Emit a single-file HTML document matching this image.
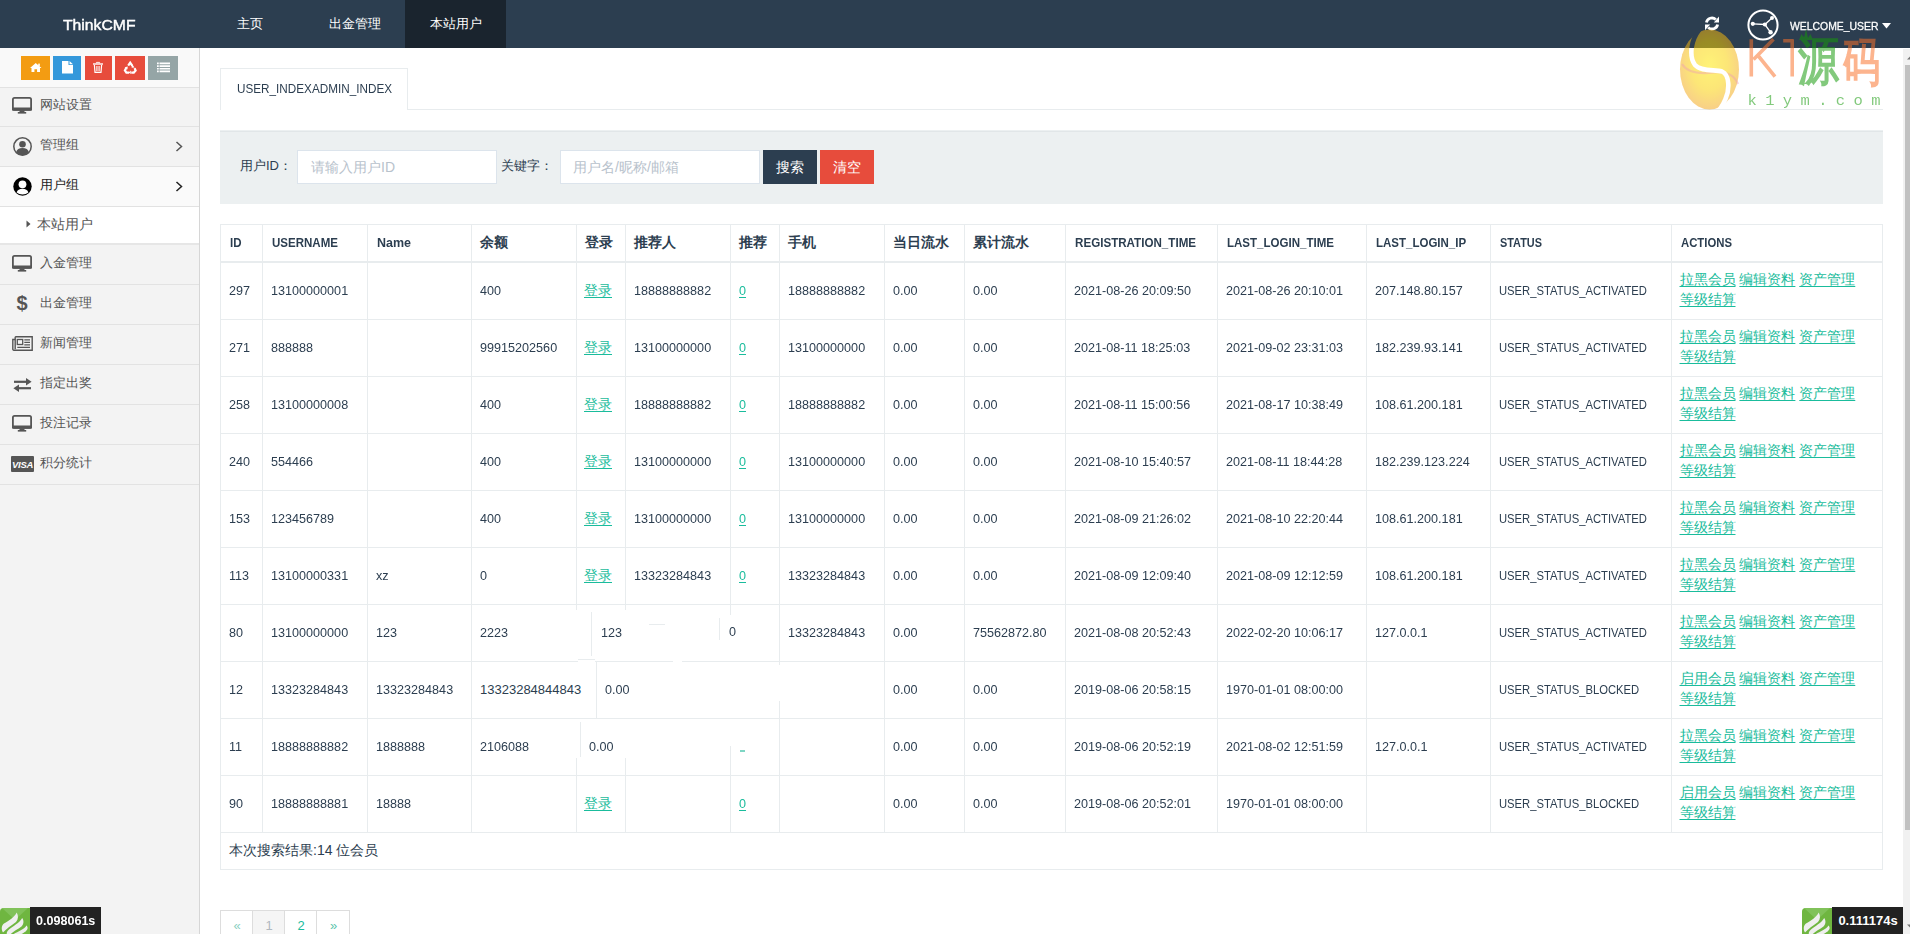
<!DOCTYPE html>
<html><head><meta charset="utf-8"><title>ThinkCMF</title>
<style>
html,body{margin:0;padding:0;}
body{width:1910px;height:934px;overflow:hidden;position:relative;background:#fff;font-family:"Liberation Sans",sans-serif;color:#2c3e50;}
.t{position:absolute;white-space:nowrap;transform-origin:0 50%;}
.r{position:absolute;}
.lk{color:#1abc9c;text-decoration:underline;text-underline-offset:2px;}
svg{position:absolute;overflow:visible;}
</style></head><body>

<div class="r" style="left:0px;top:0px;width:1910px;height:48px;background:#2c3e50;"></div>
<div class="r" style="left:405px;top:0px;width:101px;height:48px;background:#1a242e;"></div>
<div class="t " style="left:63.0px;top:14.6px;font-size:15.5px;line-height:20px;color:#fff;transform:scaleX(1.0140);-webkit-text-stroke:0.45px #fff;">ThinkCMF</div>
<div class="t " style="left:237.0px;top:13.5px;font-size:13px;line-height:20px;color:#fff;">主页</div>
<div class="t " style="left:329.0px;top:13.5px;font-size:13px;line-height:20px;color:#fff;">出金管理</div>
<div class="t " style="left:429.5px;top:13.5px;font-size:13px;line-height:20px;color:#fff;">本站用户</div>
<div class="t " style="left:1790.0px;top:16.1px;font-size:11.8px;line-height:20px;color:#fff;transform:scaleX(0.8824);-webkit-text-stroke:0.3px #fff;">WELCOME_USER</div>
<svg style="left:1882px;top:23px" width="9" height="6"><path d="M0 0 L9 0 L4.5 5.5 Z" fill="#fff"/></svg>
<svg style="left:1703px;top:15px" width="18" height="17" viewBox="0 0 18 17">
<path d="M3.4 7.6 A5.6 5.6 0 0 1 12.8 4.6" fill="none" stroke="#fff" stroke-width="2.8"/>
<path d="M10.8 7.4 L16 7.4 L16 1.6 Z" fill="#fff"/>
<path d="M14.6 9.4 A5.6 5.6 0 0 1 5.2 12.4" fill="none" stroke="#fff" stroke-width="2.8"/>
<path d="M7.2 9.6 L2 9.6 L2 15.2 Z" fill="#fff"/>
</svg>
<svg style="left:1747px;top:9px" width="32" height="32" viewBox="0 0 32 32">
<circle cx="16" cy="16" r="14.6" fill="none" stroke="#fff" stroke-width="2"/>
<path d="M5.8 14.8 L17.9 15.5 L25 9.1 M17.9 15.5 L23.6 23.3" stroke="#fff" stroke-width="1.3" fill="none"/>
<circle cx="5.8" cy="14.8" r="2.1" fill="#fff"/><circle cx="17.9" cy="15.5" r="2.1" fill="#fff"/>
<circle cx="25" cy="9.1" r="2" fill="#fff"/><circle cx="23.6" cy="23.3" r="2.2" fill="#fff"/>
</svg>
<div class="r" style="left:0px;top:48px;width:199px;height:886px;background:#f3f3f3;"></div>
<div class="r" style="left:199px;top:48px;width:1px;height:886px;background:#d6d6d6;"></div>
<div class="r" style="left:0px;top:48px;width:199px;height:39px;background:#f9f9f9;"></div>
<div class="r" style="left:0px;top:87px;width:199px;height:1px;background:#e2e2e2;"></div>
<div class="r" style="left:21px;top:56px;width:29px;height:24px;background:#f39c12;"></div>
<div class="r" style="left:53px;top:56px;width:28px;height:24px;background:#3498db;"></div>
<div class="r" style="left:85px;top:56px;width:27px;height:24px;background:#e74c3c;"></div>
<div class="r" style="left:115px;top:56px;width:30px;height:24px;background:#e74c3c;"></div>
<div class="r" style="left:148px;top:56px;width:30px;height:24px;background:#95a5a6;"></div>
<svg style="left:29.5px;top:63px" width="11.5" height="9" viewBox="0 0 13 10">
<path d="M6.5 0 L0 5.6 L1.7 5.6 L1.7 10 L5 10 L5 7 L8 7 L8 10 L11.3 10 L11.3 5.6 L13 5.6 Z" fill="#fff"/>
<rect x="9.3" y="0.6" width="1.8" height="3" fill="#fff"/></svg>
<svg style="left:62px;top:61px" width="11" height="13" viewBox="0 0 11 13">
<path d="M0 0 L6.5 0 L6.5 4 L11 4 L11 12.5 L0 12.5 Z M7.5 0 L11 3.2 L7.5 3.2 Z" fill="#fff"/></svg>
<svg style="left:93px;top:62px" width="10" height="11" viewBox="0 0 10 11">
<path d="M3.4 1.3 L3.4 0.4 L6.6 0.4 L6.6 1.3" fill="none" stroke="#fff" stroke-width="0.9"/>
<rect x="0" y="1.3" width="10" height="1.4" fill="#fff"/>
<path d="M1.4 3 L2 10.4 L8 10.4 L8.6 3" fill="none" stroke="#fff" stroke-width="1.2"/>
<path d="M3.7 4 V9.2 M5 4 V9.2 M6.3 4 V9.2" stroke="#fff" stroke-width="0.8"/></svg>
<svg style="left:123.5px;top:61.5px" width="12.5" height="11.5" viewBox="0 0 12.5 11.5">
<path d="M4.2 3.6 L6.2 0.6 L8.4 3.8" fill="none" stroke="#fff" stroke-width="2.2"/>
<path d="M10.6 6.2 L11.6 8.6 L9.8 10.6 L7.2 10.6" fill="none" stroke="#fff" stroke-width="2.2"/>
<path d="M5 10.6 L2.4 10.6 L0.9 8.4 L2.2 6" fill="none" stroke="#fff" stroke-width="2.2"/>
<path d="M8.2 2.4 L10.6 5.6 L7.6 5.8 Z M6.8 8.4 L4.6 10.6 L6.8 12 Z M0.6 5.2 L3.8 4.6 L3.4 7.6 Z" fill="#fff"/>
</svg>
<svg style="left:157px;top:62px" width="13" height="11" viewBox="0 0 13 11">
<path d="M0 0.5 H13 V2.2 H0 Z M0 3.2 H13 V4.9 H0 Z M0 5.9 H13 V7.6 H0 Z M0 8.6 H13 V10.3 H0 Z" fill="#fff"/>
<path d="M2.2 0 V11" stroke="#95a5a6" stroke-width="0.8"/></svg>
<div class="r" style="left:0px;top:126px;width:199px;height:1px;background:#e2e2e2;"></div>
<div class="t " style="left:40.0px;top:94.8px;font-size:13px;line-height:20px;color:#555;">网站设置</div>
<div class="r" style="left:0px;top:166px;width:199px;height:1px;background:#e2e2e2;"></div>
<div class="t " style="left:40.0px;top:134.8px;font-size:13px;line-height:20px;color:#555;">管理组</div>
<svg style="left:175px;top:141.0px" width="8" height="11"><path d="M1.5 1 L6.5 5.5 L1.5 10" fill="none" stroke="#555" stroke-width="1.5"/></svg>
<div class="r" style="left:0px;top:167px;width:199px;height:39px;background:#fafafa;"></div>
<div class="r" style="left:0px;top:206px;width:199px;height:1px;background:#e2e2e2;"></div>
<div class="t " style="left:40.0px;top:174.8px;font-size:13px;line-height:20px;color:#222;">用户组</div>
<svg style="left:175px;top:181.0px" width="8" height="11"><path d="M1.5 1 L6.5 5.5 L1.5 10" fill="none" stroke="#222" stroke-width="1.5"/></svg>
<div class="r" style="left:0px;top:207px;width:199px;height:36px;background:#fff;"></div>
<div class="r" style="left:0px;top:243px;width:199px;height:2px;background:#e6e6e6;"></div>
<svg style="left:26px;top:220px" width="5" height="8"><path d="M0.5 0.5 L4.5 4 L0.5 7.5 Z" fill="#555"/></svg>
<div class="t " style="left:37.0px;top:214.0px;font-size:14px;line-height:20px;color:#555;">本站用户</div>
<div class="r" style="left:0px;top:284px;width:199px;height:1px;background:#e2e2e2;"></div>
<div class="t " style="left:40.0px;top:252.8px;font-size:13px;line-height:20px;color:#555;">入金管理</div>
<div class="r" style="left:0px;top:324px;width:199px;height:1px;background:#e2e2e2;"></div>
<div class="t " style="left:40.0px;top:292.8px;font-size:13px;line-height:20px;color:#555;">出金管理</div>
<div class="r" style="left:0px;top:364px;width:199px;height:1px;background:#e2e2e2;"></div>
<div class="t " style="left:40.0px;top:332.8px;font-size:13px;line-height:20px;color:#555;">新闻管理</div>
<div class="r" style="left:0px;top:404px;width:199px;height:1px;background:#e2e2e2;"></div>
<div class="t " style="left:40.0px;top:372.8px;font-size:13px;line-height:20px;color:#555;">指定出奖</div>
<div class="r" style="left:0px;top:444px;width:199px;height:1px;background:#e2e2e2;"></div>
<div class="t " style="left:40.0px;top:412.8px;font-size:13px;line-height:20px;color:#555;">投注记录</div>
<div class="r" style="left:0px;top:484px;width:199px;height:1px;background:#e2e2e2;"></div>
<div class="t " style="left:40.0px;top:452.8px;font-size:13px;line-height:20px;color:#555;">积分统计</div>
<svg style="left:12.0px;top:97.0px" width="20" height="17" viewBox="0 0 20 17">
<rect x="0.9" y="0.9" width="18.2" height="12" rx="1.6" fill="none" stroke="#555" stroke-width="1.8"/>
<rect x="0" y="10.4" width="20" height="3.4" rx="1" fill="#555"/>
<rect x="7.5" y="13.5" width="5" height="1.8" fill="#555"/><rect x="5.8" y="15" width="8.4" height="1.6" fill="#555"/>
</svg>
<svg style="left:13.0px;top:137.0px" width="19" height="19" viewBox="0 0 19 19">
<circle cx="9.5" cy="9.5" r="8.7" fill="none" stroke="#555" stroke-width="1.5"/>
<circle cx="9.5" cy="7.2" r="3.3" fill="#555"/>
<path d="M3.2 15.2 Q4.2 11 9.5 11 Q14.8 11 15.8 15.2 Q13 18.2 9.5 18.2 Q6 18.2 3.2 15.2 Z" fill="#555"/>
</svg>
<svg style="left:13.0px;top:177.0px" width="19" height="19" viewBox="0 0 19 19">
<circle cx="9.5" cy="9.5" r="9.2" fill="#000"/>
<circle cx="9.5" cy="7.3" r="3.9" fill="#fff"/>
<path d="M3.6 15.4 Q4.8 11.8 9.5 11.8 Q14.2 11.8 15.4 15.4 Q13 17.4 9.5 17.4 Q6 17.4 3.6 15.4 Z" fill="#fff"/>
</svg>
<svg style="left:12.0px;top:255.2px" width="20" height="17" viewBox="0 0 20 17">
<rect x="0.9" y="0.9" width="18.2" height="12" rx="1.6" fill="none" stroke="#555" stroke-width="1.8"/>
<rect x="0" y="10.4" width="20" height="3.4" rx="1" fill="#555"/>
<rect x="7.5" y="13.5" width="5" height="1.8" fill="#555"/><rect x="5.8" y="15" width="8.4" height="1.6" fill="#555"/>
</svg>
<div class="t" style="left:16.5px;top:293.0px;font-size:20px;line-height:20px;font-weight:bold;color:#555">$</div>
<svg style="left:12.0px;top:336.2px" width="21" height="15" viewBox="0 0 21 15">
<path d="M3.2 0.8 H20.2 V14.2 H1.8 Q0.8 14.2 0.8 13 V3.5 H3.2" fill="none" stroke="#555" stroke-width="1.4"/>
<path d="M3.2 0.8 V13.2" stroke="#555" stroke-width="1.4"/>
<rect x="5.3" y="3.5" width="5.4" height="5" fill="none" stroke="#555" stroke-width="1.3"/>
<path d="M12.3 3.8 H18 M12.3 6.3 H18 M12.3 8.8 H18 M5.3 11.3 H18" stroke="#555" stroke-width="1.3"/>
</svg>
<svg style="left:12.5px;top:378.0px" width="19" height="14" viewBox="0 0 19 14">
<path d="M1 3.8 H14" stroke="#555" stroke-width="2.2"/><path d="M13 0 L18.6 3.8 L13 7.6 Z" fill="#555"/>
<path d="M18 10.2 H5" stroke="#555" stroke-width="2.2"/><path d="M6 6.4 L0.4 10.2 L6 14 Z" fill="#555"/>
</svg>
<svg style="left:12.0px;top:415.2px" width="20" height="17" viewBox="0 0 20 17">
<rect x="0.9" y="0.9" width="18.2" height="12" rx="1.6" fill="none" stroke="#555" stroke-width="1.8"/>
<rect x="0" y="10.4" width="20" height="3.4" rx="1" fill="#555"/>
<rect x="7.5" y="13.5" width="5" height="1.8" fill="#555"/><rect x="5.8" y="15" width="8.4" height="1.6" fill="#555"/>
</svg>
<svg style="left:11.0px;top:455.5px" width="23" height="16" viewBox="0 0 23 16">
<rect x="0" y="0" width="23" height="16" rx="1" fill="#555"/>
<text x="11.5" y="11.8" text-anchor="middle" font-family="Liberation Sans" font-weight="bold" font-style="italic" font-size="9.5" fill="#fff" letter-spacing="-0.3">VISA</text>
</svg>
<div class="r" style="left:220px;top:68px;width:188px;height:1px;background:#e8ecee;"></div>
<div class="r" style="left:220px;top:68px;width:1px;height:42px;background:#e8ecee;"></div>
<div class="r" style="left:407px;top:68px;width:1px;height:42px;background:#e8ecee;"></div>
<div class="r" style="left:407px;top:109px;width:1476px;height:1px;background:#e8ecee;"></div>
<div class="t " style="left:236.5px;top:78.5px;font-size:13px;line-height:20px;color:#2c3e50;transform:scaleX(0.9017);">USER_INDEXADMIN_INDEX</div>
<div class="r" style="left:220px;top:130px;width:1663px;height:74px;background:#ecf0f1;"></div>
<div class="r" style="left:220px;top:131px;width:1663px;height:1px;background:#e1e6e8;"></div>
<div class="t " style="left:240.0px;top:156.0px;font-size:13px;line-height:20px;color:#2c3e50;">用户ID：</div>
<div class="r" style="left:297px;top:150px;width:200px;height:34px;background:#fff;box-sizing:border-box;border:1px solid #dce4ec;"></div>
<div class="t " style="left:311.0px;top:157.0px;font-size:14px;line-height:20px;color:#b8c2cc;">请输入用户ID</div>
<div class="t " style="left:501.0px;top:156.0px;font-size:13px;line-height:20px;color:#2c3e50;">关键字：</div>
<div class="r" style="left:560px;top:150px;width:200px;height:34px;background:#fff;box-sizing:border-box;border:1px solid #dce4ec;"></div>
<div class="t " style="left:573.0px;top:157.0px;font-size:14px;line-height:20px;color:#b8c2cc;">用户名/昵称/邮箱</div>
<div class="r" style="left:763px;top:150px;width:54px;height:34px;background:#2c3e50;"></div>
<div class="t " style="left:776.0px;top:156.5px;font-size:14px;line-height:20px;color:#fff;">搜索</div>
<div class="r" style="left:820px;top:150px;width:54px;height:34px;background:#e74c3c;"></div>
<div class="t " style="left:833.0px;top:156.5px;font-size:14px;line-height:20px;color:#fff;">清空</div>
<div class="r" style="left:220px;top:224px;width:1663px;height:1px;background:#e8ecee;"></div>
<div class="r" style="left:220px;top:224px;width:1px;height:645px;background:#e8ecee;"></div>
<div class="r" style="left:1882px;top:224px;width:1px;height:645px;background:#e8ecee;"></div>
<div class="r" style="left:220px;top:869px;width:1663px;height:1px;background:#e8ecee;"></div>
<div class="r" style="left:220px;top:261px;width:1663px;height:2px;background:#e8ecee;"></div>
<div class="r" style="left:220px;top:319px;width:1663px;height:1px;background:#e8ecee;"></div>
<div class="r" style="left:220px;top:376px;width:1663px;height:1px;background:#e8ecee;"></div>
<div class="r" style="left:220px;top:433px;width:1663px;height:1px;background:#e8ecee;"></div>
<div class="r" style="left:220px;top:490px;width:1663px;height:1px;background:#e8ecee;"></div>
<div class="r" style="left:220px;top:547px;width:1663px;height:1px;background:#e8ecee;"></div>
<div class="r" style="left:220px;top:604px;width:1663px;height:1px;background:#e8ecee;"></div>
<div class="r" style="left:220px;top:661px;width:1663px;height:1px;background:#e8ecee;"></div>
<div class="r" style="left:220px;top:718px;width:1663px;height:1px;background:#e8ecee;"></div>
<div class="r" style="left:220px;top:775px;width:1663px;height:1px;background:#e8ecee;"></div>
<div class="r" style="left:220px;top:832px;width:1663px;height:1px;background:#e8ecee;"></div>
<div class="r" style="left:262px;top:224px;width:1px;height:608px;background:#e8ecee;"></div>
<div class="r" style="left:367px;top:224px;width:1px;height:608px;background:#e8ecee;"></div>
<div class="r" style="left:471px;top:224px;width:1px;height:608px;background:#e8ecee;"></div>
<div class="r" style="left:576px;top:224px;width:1px;height:380px;background:#e8ecee;"></div>
<div class="r" style="left:576px;top:775px;width:1px;height:57px;background:#e8ecee;"></div>
<div class="r" style="left:625px;top:224px;width:1px;height:380px;background:#e8ecee;"></div>
<div class="r" style="left:625px;top:775px;width:1px;height:57px;background:#e8ecee;"></div>
<div class="r" style="left:730px;top:224px;width:1px;height:380px;background:#e8ecee;"></div>
<div class="r" style="left:730px;top:775px;width:1px;height:57px;background:#e8ecee;"></div>
<div class="r" style="left:779px;top:224px;width:1px;height:608px;background:#e8ecee;"></div>
<div class="r" style="left:884px;top:224px;width:1px;height:608px;background:#e8ecee;"></div>
<div class="r" style="left:964px;top:224px;width:1px;height:608px;background:#e8ecee;"></div>
<div class="r" style="left:1065px;top:224px;width:1px;height:608px;background:#e8ecee;"></div>
<div class="r" style="left:1217px;top:224px;width:1px;height:608px;background:#e8ecee;"></div>
<div class="r" style="left:1366px;top:224px;width:1px;height:608px;background:#e8ecee;"></div>
<div class="r" style="left:1490px;top:224px;width:1px;height:608px;background:#e8ecee;"></div>
<div class="r" style="left:1671px;top:224px;width:1px;height:608px;background:#e8ecee;"></div>
<div class="t " style="left:229.5px;top:232.5px;font-size:13px;line-height:20px;font-weight:bold;color:#2c3e50;transform:scaleX(0.8846);">ID</div>
<div class="t " style="left:271.5px;top:232.5px;font-size:13px;line-height:20px;font-weight:bold;color:#2c3e50;transform:scaleX(0.8871);">USERNAME</div>
<div class="t " style="left:376.5px;top:232.5px;font-size:13px;line-height:20px;font-weight:bold;color:#2c3e50;transform:scaleX(0.9605);">Name</div>
<div class="t " style="left:480.0px;top:232.0px;font-size:14px;line-height:20px;font-weight:bold;color:#2c3e50;">余额</div>
<div class="t " style="left:585.0px;top:232.0px;font-size:14px;line-height:20px;font-weight:bold;color:#2c3e50;">登录</div>
<div class="t " style="left:634.0px;top:232.0px;font-size:14px;line-height:20px;font-weight:bold;color:#2c3e50;">推荐人</div>
<div class="t " style="left:739.0px;top:232.0px;font-size:14px;line-height:20px;font-weight:bold;color:#2c3e50;">推荐</div>
<div class="t " style="left:788.0px;top:232.0px;font-size:14px;line-height:20px;font-weight:bold;color:#2c3e50;">手机</div>
<div class="t " style="left:893.0px;top:232.0px;font-size:14px;line-height:20px;font-weight:bold;color:#2c3e50;">当日流水</div>
<div class="t " style="left:973.0px;top:232.0px;font-size:14px;line-height:20px;font-weight:bold;color:#2c3e50;">累计流水</div>
<div class="t " style="left:1074.5px;top:232.5px;font-size:13px;line-height:20px;font-weight:bold;color:#2c3e50;transform:scaleX(0.8930);">REGISTRATION_TIME</div>
<div class="t " style="left:1226.5px;top:232.5px;font-size:13px;line-height:20px;font-weight:bold;color:#2c3e50;transform:scaleX(0.8872);">LAST_LOGIN_TIME</div>
<div class="t " style="left:1375.5px;top:232.5px;font-size:13px;line-height:20px;font-weight:bold;color:#2c3e50;transform:scaleX(0.8850);">LAST_LOGIN_IP</div>
<div class="t " style="left:1499.5px;top:232.5px;font-size:13px;line-height:20px;font-weight:bold;color:#2c3e50;transform:scaleX(0.8383);">STATUS</div>
<div class="t " style="left:1680.5px;top:232.5px;font-size:13px;line-height:20px;font-weight:bold;color:#2c3e50;transform:scaleX(0.8718);">ACTIONS</div>
<div class="t " style="left:229.0px;top:280.5px;font-size:13px;line-height:20px;color:#2c3e50;transform:scaleX(0.9700);">297</div>
<div class="t " style="left:271.0px;top:280.5px;font-size:13px;line-height:20px;color:#2c3e50;transform:scaleX(0.9700);">13100000001</div>
<div class="t " style="left:480.0px;top:280.5px;font-size:13px;line-height:20px;color:#2c3e50;transform:scaleX(0.9700);">400</div>
<div class="t lk" style="left:584.0px;top:279.7px;font-size:14px;line-height:20px;color:#1abc9c;">登录</div>
<div class="t " style="left:634.0px;top:280.5px;font-size:13px;line-height:20px;color:#2c3e50;transform:scaleX(0.9700);">18888888882</div>
<div class="t lk" style="left:739.0px;top:280.5px;font-size:13px;line-height:20px;color:#1abc9c;transform:scaleX(0.9700);">0</div>
<div class="t " style="left:788.0px;top:280.5px;font-size:13px;line-height:20px;color:#2c3e50;transform:scaleX(0.9700);">18888888882</div>
<div class="t " style="left:893.0px;top:280.5px;font-size:13px;line-height:20px;color:#2c3e50;transform:scaleX(0.9700);">0.00</div>
<div class="t " style="left:973.0px;top:280.5px;font-size:13px;line-height:20px;color:#2c3e50;transform:scaleX(0.9700);">0.00</div>
<div class="t " style="left:1074.0px;top:280.5px;font-size:13px;line-height:20px;color:#2c3e50;transform:scaleX(0.9700);">2021-08-26 20:09:50</div>
<div class="t " style="left:1226.0px;top:280.5px;font-size:13px;line-height:20px;color:#2c3e50;transform:scaleX(0.9700);">2021-08-26 20:10:01</div>
<div class="t " style="left:1375.0px;top:280.5px;font-size:13px;line-height:20px;color:#2c3e50;transform:scaleX(0.9700);">207.148.80.157</div>
<div class="t " style="left:1499.0px;top:280.5px;font-size:13px;line-height:20px;color:#2c3e50;transform:scaleX(0.8650);">USER_STATUS_ACTIVATED</div>
<div class="t" style="left:1679.5px;top:269.0px;font-size:14px;line-height:20px;color:#1abc9c"><span class="lk">拉黑会员</span> <span class="lk">编辑资料</span> <span class="lk">资产管理</span></div>
<div class="t" style="left:1679.5px;top:289.0px;font-size:14px;line-height:20px;color:#1abc9c"><span class="lk">等级结算</span></div>
<div class="t " style="left:229.0px;top:337.5px;font-size:13px;line-height:20px;color:#2c3e50;transform:scaleX(0.9700);">271</div>
<div class="t " style="left:271.0px;top:337.5px;font-size:13px;line-height:20px;color:#2c3e50;transform:scaleX(0.9700);">888888</div>
<div class="t " style="left:480.0px;top:337.5px;font-size:13px;line-height:20px;color:#2c3e50;transform:scaleX(0.9700);">99915202560</div>
<div class="t lk" style="left:584.0px;top:336.7px;font-size:14px;line-height:20px;color:#1abc9c;">登录</div>
<div class="t " style="left:634.0px;top:337.5px;font-size:13px;line-height:20px;color:#2c3e50;transform:scaleX(0.9700);">13100000000</div>
<div class="t lk" style="left:739.0px;top:337.5px;font-size:13px;line-height:20px;color:#1abc9c;transform:scaleX(0.9700);">0</div>
<div class="t " style="left:788.0px;top:337.5px;font-size:13px;line-height:20px;color:#2c3e50;transform:scaleX(0.9700);">13100000000</div>
<div class="t " style="left:893.0px;top:337.5px;font-size:13px;line-height:20px;color:#2c3e50;transform:scaleX(0.9700);">0.00</div>
<div class="t " style="left:973.0px;top:337.5px;font-size:13px;line-height:20px;color:#2c3e50;transform:scaleX(0.9700);">0.00</div>
<div class="t " style="left:1074.0px;top:337.5px;font-size:13px;line-height:20px;color:#2c3e50;transform:scaleX(0.9700);">2021-08-11 18:25:03</div>
<div class="t " style="left:1226.0px;top:337.5px;font-size:13px;line-height:20px;color:#2c3e50;transform:scaleX(0.9700);">2021-09-02 23:31:03</div>
<div class="t " style="left:1375.0px;top:337.5px;font-size:13px;line-height:20px;color:#2c3e50;transform:scaleX(0.9700);">182.239.93.141</div>
<div class="t " style="left:1499.0px;top:337.5px;font-size:13px;line-height:20px;color:#2c3e50;transform:scaleX(0.8650);">USER_STATUS_ACTIVATED</div>
<div class="t" style="left:1679.5px;top:326.0px;font-size:14px;line-height:20px;color:#1abc9c"><span class="lk">拉黑会员</span> <span class="lk">编辑资料</span> <span class="lk">资产管理</span></div>
<div class="t" style="left:1679.5px;top:346.0px;font-size:14px;line-height:20px;color:#1abc9c"><span class="lk">等级结算</span></div>
<div class="t " style="left:229.0px;top:394.5px;font-size:13px;line-height:20px;color:#2c3e50;transform:scaleX(0.9700);">258</div>
<div class="t " style="left:271.0px;top:394.5px;font-size:13px;line-height:20px;color:#2c3e50;transform:scaleX(0.9700);">13100000008</div>
<div class="t " style="left:480.0px;top:394.5px;font-size:13px;line-height:20px;color:#2c3e50;transform:scaleX(0.9700);">400</div>
<div class="t lk" style="left:584.0px;top:393.7px;font-size:14px;line-height:20px;color:#1abc9c;">登录</div>
<div class="t " style="left:634.0px;top:394.5px;font-size:13px;line-height:20px;color:#2c3e50;transform:scaleX(0.9700);">18888888882</div>
<div class="t lk" style="left:739.0px;top:394.5px;font-size:13px;line-height:20px;color:#1abc9c;transform:scaleX(0.9700);">0</div>
<div class="t " style="left:788.0px;top:394.5px;font-size:13px;line-height:20px;color:#2c3e50;transform:scaleX(0.9700);">18888888882</div>
<div class="t " style="left:893.0px;top:394.5px;font-size:13px;line-height:20px;color:#2c3e50;transform:scaleX(0.9700);">0.00</div>
<div class="t " style="left:973.0px;top:394.5px;font-size:13px;line-height:20px;color:#2c3e50;transform:scaleX(0.9700);">0.00</div>
<div class="t " style="left:1074.0px;top:394.5px;font-size:13px;line-height:20px;color:#2c3e50;transform:scaleX(0.9700);">2021-08-11 15:00:56</div>
<div class="t " style="left:1226.0px;top:394.5px;font-size:13px;line-height:20px;color:#2c3e50;transform:scaleX(0.9700);">2021-08-17 10:38:49</div>
<div class="t " style="left:1375.0px;top:394.5px;font-size:13px;line-height:20px;color:#2c3e50;transform:scaleX(0.9700);">108.61.200.181</div>
<div class="t " style="left:1499.0px;top:394.5px;font-size:13px;line-height:20px;color:#2c3e50;transform:scaleX(0.8650);">USER_STATUS_ACTIVATED</div>
<div class="t" style="left:1679.5px;top:383.0px;font-size:14px;line-height:20px;color:#1abc9c"><span class="lk">拉黑会员</span> <span class="lk">编辑资料</span> <span class="lk">资产管理</span></div>
<div class="t" style="left:1679.5px;top:403.0px;font-size:14px;line-height:20px;color:#1abc9c"><span class="lk">等级结算</span></div>
<div class="t " style="left:229.0px;top:451.5px;font-size:13px;line-height:20px;color:#2c3e50;transform:scaleX(0.9700);">240</div>
<div class="t " style="left:271.0px;top:451.5px;font-size:13px;line-height:20px;color:#2c3e50;transform:scaleX(0.9700);">554466</div>
<div class="t " style="left:480.0px;top:451.5px;font-size:13px;line-height:20px;color:#2c3e50;transform:scaleX(0.9700);">400</div>
<div class="t lk" style="left:584.0px;top:450.7px;font-size:14px;line-height:20px;color:#1abc9c;">登录</div>
<div class="t " style="left:634.0px;top:451.5px;font-size:13px;line-height:20px;color:#2c3e50;transform:scaleX(0.9700);">13100000000</div>
<div class="t lk" style="left:739.0px;top:451.5px;font-size:13px;line-height:20px;color:#1abc9c;transform:scaleX(0.9700);">0</div>
<div class="t " style="left:788.0px;top:451.5px;font-size:13px;line-height:20px;color:#2c3e50;transform:scaleX(0.9700);">13100000000</div>
<div class="t " style="left:893.0px;top:451.5px;font-size:13px;line-height:20px;color:#2c3e50;transform:scaleX(0.9700);">0.00</div>
<div class="t " style="left:973.0px;top:451.5px;font-size:13px;line-height:20px;color:#2c3e50;transform:scaleX(0.9700);">0.00</div>
<div class="t " style="left:1074.0px;top:451.5px;font-size:13px;line-height:20px;color:#2c3e50;transform:scaleX(0.9700);">2021-08-10 15:40:57</div>
<div class="t " style="left:1226.0px;top:451.5px;font-size:13px;line-height:20px;color:#2c3e50;transform:scaleX(0.9700);">2021-08-11 18:44:28</div>
<div class="t " style="left:1375.0px;top:451.5px;font-size:13px;line-height:20px;color:#2c3e50;transform:scaleX(0.9700);">182.239.123.224</div>
<div class="t " style="left:1499.0px;top:451.5px;font-size:13px;line-height:20px;color:#2c3e50;transform:scaleX(0.8650);">USER_STATUS_ACTIVATED</div>
<div class="t" style="left:1679.5px;top:440.0px;font-size:14px;line-height:20px;color:#1abc9c"><span class="lk">拉黑会员</span> <span class="lk">编辑资料</span> <span class="lk">资产管理</span></div>
<div class="t" style="left:1679.5px;top:460.0px;font-size:14px;line-height:20px;color:#1abc9c"><span class="lk">等级结算</span></div>
<div class="t " style="left:229.0px;top:508.5px;font-size:13px;line-height:20px;color:#2c3e50;transform:scaleX(0.9700);">153</div>
<div class="t " style="left:271.0px;top:508.5px;font-size:13px;line-height:20px;color:#2c3e50;transform:scaleX(0.9700);">123456789</div>
<div class="t " style="left:480.0px;top:508.5px;font-size:13px;line-height:20px;color:#2c3e50;transform:scaleX(0.9700);">400</div>
<div class="t lk" style="left:584.0px;top:507.7px;font-size:14px;line-height:20px;color:#1abc9c;">登录</div>
<div class="t " style="left:634.0px;top:508.5px;font-size:13px;line-height:20px;color:#2c3e50;transform:scaleX(0.9700);">13100000000</div>
<div class="t lk" style="left:739.0px;top:508.5px;font-size:13px;line-height:20px;color:#1abc9c;transform:scaleX(0.9700);">0</div>
<div class="t " style="left:788.0px;top:508.5px;font-size:13px;line-height:20px;color:#2c3e50;transform:scaleX(0.9700);">13100000000</div>
<div class="t " style="left:893.0px;top:508.5px;font-size:13px;line-height:20px;color:#2c3e50;transform:scaleX(0.9700);">0.00</div>
<div class="t " style="left:973.0px;top:508.5px;font-size:13px;line-height:20px;color:#2c3e50;transform:scaleX(0.9700);">0.00</div>
<div class="t " style="left:1074.0px;top:508.5px;font-size:13px;line-height:20px;color:#2c3e50;transform:scaleX(0.9700);">2021-08-09 21:26:02</div>
<div class="t " style="left:1226.0px;top:508.5px;font-size:13px;line-height:20px;color:#2c3e50;transform:scaleX(0.9700);">2021-08-10 22:20:44</div>
<div class="t " style="left:1375.0px;top:508.5px;font-size:13px;line-height:20px;color:#2c3e50;transform:scaleX(0.9700);">108.61.200.181</div>
<div class="t " style="left:1499.0px;top:508.5px;font-size:13px;line-height:20px;color:#2c3e50;transform:scaleX(0.8650);">USER_STATUS_ACTIVATED</div>
<div class="t" style="left:1679.5px;top:497.0px;font-size:14px;line-height:20px;color:#1abc9c"><span class="lk">拉黑会员</span> <span class="lk">编辑资料</span> <span class="lk">资产管理</span></div>
<div class="t" style="left:1679.5px;top:517.0px;font-size:14px;line-height:20px;color:#1abc9c"><span class="lk">等级结算</span></div>
<div class="t " style="left:229.0px;top:565.5px;font-size:13px;line-height:20px;color:#2c3e50;transform:scaleX(0.9700);">113</div>
<div class="t " style="left:271.0px;top:565.5px;font-size:13px;line-height:20px;color:#2c3e50;transform:scaleX(0.9700);">13100000331</div>
<div class="t " style="left:376.0px;top:565.5px;font-size:13px;line-height:20px;color:#2c3e50;transform:scaleX(0.9700);">xz</div>
<div class="t " style="left:480.0px;top:565.5px;font-size:13px;line-height:20px;color:#2c3e50;transform:scaleX(0.9700);">0</div>
<div class="t lk" style="left:584.0px;top:564.7px;font-size:14px;line-height:20px;color:#1abc9c;">登录</div>
<div class="t " style="left:634.0px;top:565.5px;font-size:13px;line-height:20px;color:#2c3e50;transform:scaleX(0.9700);">13323284843</div>
<div class="t lk" style="left:739.0px;top:565.5px;font-size:13px;line-height:20px;color:#1abc9c;transform:scaleX(0.9700);">0</div>
<div class="t " style="left:788.0px;top:565.5px;font-size:13px;line-height:20px;color:#2c3e50;transform:scaleX(0.9700);">13323284843</div>
<div class="t " style="left:893.0px;top:565.5px;font-size:13px;line-height:20px;color:#2c3e50;transform:scaleX(0.9700);">0.00</div>
<div class="t " style="left:973.0px;top:565.5px;font-size:13px;line-height:20px;color:#2c3e50;transform:scaleX(0.9700);">0.00</div>
<div class="t " style="left:1074.0px;top:565.5px;font-size:13px;line-height:20px;color:#2c3e50;transform:scaleX(0.9700);">2021-08-09 12:09:40</div>
<div class="t " style="left:1226.0px;top:565.5px;font-size:13px;line-height:20px;color:#2c3e50;transform:scaleX(0.9700);">2021-08-09 12:12:59</div>
<div class="t " style="left:1375.0px;top:565.5px;font-size:13px;line-height:20px;color:#2c3e50;transform:scaleX(0.9700);">108.61.200.181</div>
<div class="t " style="left:1499.0px;top:565.5px;font-size:13px;line-height:20px;color:#2c3e50;transform:scaleX(0.8650);">USER_STATUS_ACTIVATED</div>
<div class="t" style="left:1679.5px;top:554.0px;font-size:14px;line-height:20px;color:#1abc9c"><span class="lk">拉黑会员</span> <span class="lk">编辑资料</span> <span class="lk">资产管理</span></div>
<div class="t" style="left:1679.5px;top:574.0px;font-size:14px;line-height:20px;color:#1abc9c"><span class="lk">等级结算</span></div>
<div class="t " style="left:229.0px;top:622.5px;font-size:13px;line-height:20px;color:#2c3e50;transform:scaleX(0.9700);">80</div>
<div class="t " style="left:271.0px;top:622.5px;font-size:13px;line-height:20px;color:#2c3e50;transform:scaleX(0.9700);">13100000000</div>
<div class="t " style="left:376.0px;top:622.5px;font-size:13px;line-height:20px;color:#2c3e50;transform:scaleX(0.9700);">123</div>
<div class="t " style="left:480.0px;top:622.5px;font-size:13px;line-height:20px;color:#2c3e50;transform:scaleX(0.9700);">2223</div>
<div class="t " style="left:788.0px;top:622.5px;font-size:13px;line-height:20px;color:#2c3e50;transform:scaleX(0.9700);">13323284843</div>
<div class="t " style="left:893.0px;top:622.5px;font-size:13px;line-height:20px;color:#2c3e50;transform:scaleX(0.9700);">0.00</div>
<div class="t " style="left:973.0px;top:622.5px;font-size:13px;line-height:20px;color:#2c3e50;transform:scaleX(0.9700);">75562872.80</div>
<div class="t " style="left:1074.0px;top:622.5px;font-size:13px;line-height:20px;color:#2c3e50;transform:scaleX(0.9700);">2021-08-08 20:52:43</div>
<div class="t " style="left:1226.0px;top:622.5px;font-size:13px;line-height:20px;color:#2c3e50;transform:scaleX(0.9700);">2022-02-20 10:06:17</div>
<div class="t " style="left:1375.0px;top:622.5px;font-size:13px;line-height:20px;color:#2c3e50;transform:scaleX(0.9700);">127.0.0.1</div>
<div class="t " style="left:1499.0px;top:622.5px;font-size:13px;line-height:20px;color:#2c3e50;transform:scaleX(0.8650);">USER_STATUS_ACTIVATED</div>
<div class="t" style="left:1679.5px;top:611.0px;font-size:14px;line-height:20px;color:#1abc9c"><span class="lk">拉黑会员</span> <span class="lk">编辑资料</span> <span class="lk">资产管理</span></div>
<div class="t" style="left:1679.5px;top:631.0px;font-size:14px;line-height:20px;color:#1abc9c"><span class="lk">等级结算</span></div>
<div class="t " style="left:229.0px;top:679.5px;font-size:13px;line-height:20px;color:#2c3e50;transform:scaleX(0.9700);">12</div>
<div class="t " style="left:271.0px;top:679.5px;font-size:13px;line-height:20px;color:#2c3e50;transform:scaleX(0.9700);">13323284843</div>
<div class="t " style="left:376.0px;top:679.5px;font-size:13px;line-height:20px;color:#2c3e50;transform:scaleX(0.9700);">13323284843</div>
<div class="t " style="left:480.0px;top:679.5px;font-size:13px;line-height:20px;color:#2c3e50;">13323284844843</div>
<div class="t " style="left:893.0px;top:679.5px;font-size:13px;line-height:20px;color:#2c3e50;transform:scaleX(0.9700);">0.00</div>
<div class="t " style="left:973.0px;top:679.5px;font-size:13px;line-height:20px;color:#2c3e50;transform:scaleX(0.9700);">0.00</div>
<div class="t " style="left:1074.0px;top:679.5px;font-size:13px;line-height:20px;color:#2c3e50;transform:scaleX(0.9700);">2019-08-06 20:58:15</div>
<div class="t " style="left:1226.0px;top:679.5px;font-size:13px;line-height:20px;color:#2c3e50;transform:scaleX(0.9700);">1970-01-01 08:00:00</div>
<div class="t " style="left:1499.0px;top:679.5px;font-size:13px;line-height:20px;color:#2c3e50;transform:scaleX(0.8650);">USER_STATUS_BLOCKED</div>
<div class="t" style="left:1679.5px;top:668.0px;font-size:14px;line-height:20px;color:#1abc9c"><span class="lk">启用会员</span> <span class="lk">编辑资料</span> <span class="lk">资产管理</span></div>
<div class="t" style="left:1679.5px;top:688.0px;font-size:14px;line-height:20px;color:#1abc9c"><span class="lk">等级结算</span></div>
<div class="t " style="left:229.0px;top:736.5px;font-size:13px;line-height:20px;color:#2c3e50;transform:scaleX(0.9700);">11</div>
<div class="t " style="left:271.0px;top:736.5px;font-size:13px;line-height:20px;color:#2c3e50;transform:scaleX(0.9700);">18888888882</div>
<div class="t " style="left:376.0px;top:736.5px;font-size:13px;line-height:20px;color:#2c3e50;transform:scaleX(0.9700);">1888888</div>
<div class="t " style="left:480.0px;top:736.5px;font-size:13px;line-height:20px;color:#2c3e50;transform:scaleX(0.9700);">2106088</div>
<div class="t " style="left:893.0px;top:736.5px;font-size:13px;line-height:20px;color:#2c3e50;transform:scaleX(0.9700);">0.00</div>
<div class="t " style="left:973.0px;top:736.5px;font-size:13px;line-height:20px;color:#2c3e50;transform:scaleX(0.9700);">0.00</div>
<div class="t " style="left:1074.0px;top:736.5px;font-size:13px;line-height:20px;color:#2c3e50;transform:scaleX(0.9700);">2019-08-06 20:52:19</div>
<div class="t " style="left:1226.0px;top:736.5px;font-size:13px;line-height:20px;color:#2c3e50;transform:scaleX(0.9700);">2021-08-02 12:51:59</div>
<div class="t " style="left:1375.0px;top:736.5px;font-size:13px;line-height:20px;color:#2c3e50;transform:scaleX(0.9700);">127.0.0.1</div>
<div class="t " style="left:1499.0px;top:736.5px;font-size:13px;line-height:20px;color:#2c3e50;transform:scaleX(0.8650);">USER_STATUS_ACTIVATED</div>
<div class="t" style="left:1679.5px;top:725.0px;font-size:14px;line-height:20px;color:#1abc9c"><span class="lk">拉黑会员</span> <span class="lk">编辑资料</span> <span class="lk">资产管理</span></div>
<div class="t" style="left:1679.5px;top:745.0px;font-size:14px;line-height:20px;color:#1abc9c"><span class="lk">等级结算</span></div>
<div class="t " style="left:229.0px;top:793.5px;font-size:13px;line-height:20px;color:#2c3e50;transform:scaleX(0.9700);">90</div>
<div class="t " style="left:271.0px;top:793.5px;font-size:13px;line-height:20px;color:#2c3e50;transform:scaleX(0.9700);">18888888881</div>
<div class="t " style="left:376.0px;top:793.5px;font-size:13px;line-height:20px;color:#2c3e50;transform:scaleX(0.9700);">18888</div>
<div class="t lk" style="left:584.0px;top:792.7px;font-size:14px;line-height:20px;color:#1abc9c;">登录</div>
<div class="t lk" style="left:739.0px;top:793.5px;font-size:13px;line-height:20px;color:#1abc9c;transform:scaleX(0.9700);">0</div>
<div class="t " style="left:893.0px;top:793.5px;font-size:13px;line-height:20px;color:#2c3e50;transform:scaleX(0.9700);">0.00</div>
<div class="t " style="left:973.0px;top:793.5px;font-size:13px;line-height:20px;color:#2c3e50;transform:scaleX(0.9700);">0.00</div>
<div class="t " style="left:1074.0px;top:793.5px;font-size:13px;line-height:20px;color:#2c3e50;transform:scaleX(0.9700);">2019-08-06 20:52:01</div>
<div class="t " style="left:1226.0px;top:793.5px;font-size:13px;line-height:20px;color:#2c3e50;transform:scaleX(0.9700);">1970-01-01 08:00:00</div>
<div class="t " style="left:1499.0px;top:793.5px;font-size:13px;line-height:20px;color:#2c3e50;transform:scaleX(0.8650);">USER_STATUS_BLOCKED</div>
<div class="t" style="left:1679.5px;top:782.0px;font-size:14px;line-height:20px;color:#1abc9c"><span class="lk">启用会员</span> <span class="lk">编辑资料</span> <span class="lk">资产管理</span></div>
<div class="t" style="left:1679.5px;top:802.0px;font-size:14px;line-height:20px;color:#1abc9c"><span class="lk">等级结算</span></div>
<div class="t " style="left:600.5px;top:622.5px;font-size:13px;line-height:20px;color:#2c3e50;transform:scaleX(0.9700);">123</div>
<div class="t " style="left:728.5px;top:621.5px;font-size:13px;line-height:20px;color:#2c3e50;transform:scaleX(0.9700);">0</div>
<div class="r" style="left:591px;top:612px;width:1px;height:44px;background:#e8ecee;"></div>
<div class="r" style="left:649px;top:624px;width:16px;height:1px;background:#e8ecee;"></div>
<div class="r" style="left:719px;top:618px;width:1px;height:22px;background:#e8ecee;"></div>
<div class="r" style="left:576px;top:604px;width:1px;height:6px;background:#e8ecee;"></div>
<div class="r" style="left:625px;top:604px;width:1px;height:6px;background:#e8ecee;"></div>
<div class="r" style="left:730px;top:604px;width:1px;height:11px;background:#e8ecee;"></div>
<div class="t " style="left:605.0px;top:679.5px;font-size:13px;line-height:20px;color:#2c3e50;transform:scaleX(0.9700);">0.00</div>
<div class="r" style="left:596px;top:661px;width:1px;height:58px;background:#e8ecee;"></div>
<div class="t " style="left:589.0px;top:736.5px;font-size:13px;line-height:20px;color:#2c3e50;transform:scaleX(0.9700);">0.00</div>
<div class="r" style="left:580px;top:722px;width:1px;height:35px;background:#e8ecee;"></div>
<div class="r" style="left:576px;top:758px;width:1px;height:17px;background:#e8ecee;"></div>
<div class="r" style="left:625px;top:758px;width:1px;height:17px;background:#e8ecee;"></div>
<div class="r" style="left:730px;top:746px;width:1px;height:29px;background:#e8ecee;"></div>
<div class="r" style="left:740px;top:750px;width:5px;height:2px;background:#7fd6c4;"></div>
<div class="r" style="left:779px;top:665px;width:1px;height:36px;background:#fff;"></div>
<div class="r" style="left:673px;top:660px;width:9px;height:2px;background:#fff;"></div>
<div class="r" style="left:578px;top:660px;width:17px;height:2px;background:#fff;"></div>
<div class="r" style="left:578px;top:659px;width:17px;height:1px;background:#e8ecee;"></div>
<div class="t " style="left:229.0px;top:840.0px;font-size:14px;line-height:20px;color:#2c3e50;">本次搜索结果:14 位会员</div>
<div class="r" style="left:220px;top:910px;width:130px;height:1px;background:#dddddd;"></div>
<div class="r" style="left:220px;top:910px;width:1px;height:24px;background:#dddddd;"></div>
<div class="r" style="left:252px;top:910px;width:1px;height:24px;background:#dddddd;"></div>
<div class="r" style="left:284px;top:910px;width:1px;height:24px;background:#dddddd;"></div>
<div class="r" style="left:316px;top:910px;width:1px;height:24px;background:#dddddd;"></div>
<div class="r" style="left:349px;top:910px;width:1px;height:24px;background:#dddddd;"></div>
<div class="r" style="left:253px;top:911px;width:31px;height:23px;background:#f5f5f5;"></div>
<div class="t " style="left:233.5px;top:916.0px;font-size:13px;line-height:20px;color:#8ad0c2;">«</div>
<div class="t " style="left:265.5px;top:916.0px;font-size:13px;line-height:20px;color:#b0b8bf;">1</div>
<div class="t " style="left:297.5px;top:916.0px;font-size:13px;line-height:20px;color:#1abc9c;">2</div>
<div class="t " style="left:330.0px;top:916.0px;font-size:13px;line-height:20px;color:#5bc5ae;">»</div>
<div class="r" style="left:1903px;top:49px;width:7px;height:885px;background:#f1f1f1;"></div>
<div class="r" style="left:1905px;top:65px;width:5px;height:765px;background:#c1c1c1;"></div>
<svg style="left:1907px;top:56px" width="4" height="4"><path d="M0 3.5 L3 0.5 L3 3.5 Z" fill="#777"/></svg>
<svg style="left:1907px;top:924px" width="4" height="4"><path d="M0 0.5 L3 0.5 L3 3.5 Z" fill="#777"/></svg>
<svg style="left:0px;top:907px" width="30" height="27" viewBox="0 0 30 27">
<path d="M3.5 1 H30 V27 H0 V4.5 Q0 1 3.5 1 Z" fill="#6fb640"/><path d="M2 1 L15 13 L28 1 Z" fill="#81c25a"/>
<path d="M16.7 5.4 C14.5 10, 9 13.5, 4 16.5 C1.5 18.5, 1 22, 3 25.5 C6 22, 11 18.5, 16 15 C18.5 12, 18.5 8.5, 16.7 5.4 Z" fill="#efefef"/>
<path d="M22.2 11 C19.5 16, 13 19, 9 22.5 C7 24, 6.5 26, 6.8 27 L10.8 27 C13 24.5, 18 22, 21.5 19.5 C24 17, 24 13.5, 22.2 11 Z" fill="#efefef"/>
<path d="M26.5 18.5 C24 22.5, 18 24.5, 13.8 27 L21.5 27 C24.5 25.5, 27.5 23.5, 27.6 21 C27.7 20, 27.2 19.2, 26.5 18.5 Z" fill="#efefef"/>
</svg>
<div class="r" style="left:30px;top:907px;width:71px;height:27px;background:#222;"></div>
<div class="t " style="left:35.6px;top:911.3px;font-size:13px;line-height:20px;font-weight:bold;color:#fff;transform:scaleX(0.9659);">0.098061s</div>
<svg style="left:1802px;top:907px" width="30" height="27" viewBox="0 0 30 27">
<path d="M3.5 1 H30 V27 H0 V4.5 Q0 1 3.5 1 Z" fill="#6fb640"/><path d="M2 1 L15 13 L28 1 Z" fill="#81c25a"/>
<path d="M16.7 5.4 C14.5 10, 9 13.5, 4 16.5 C1.5 18.5, 1 22, 3 25.5 C6 22, 11 18.5, 16 15 C18.5 12, 18.5 8.5, 16.7 5.4 Z" fill="#efefef"/>
<path d="M22.2 11 C19.5 16, 13 19, 9 22.5 C7 24, 6.5 26, 6.8 27 L10.8 27 C13 24.5, 18 22, 21.5 19.5 C24 17, 24 13.5, 22.2 11 Z" fill="#efefef"/>
<path d="M26.5 18.5 C24 22.5, 18 24.5, 13.8 27 L21.5 27 C24.5 25.5, 27.5 23.5, 27.6 21 C27.7 20, 27.2 19.2, 26.5 18.5 Z" fill="#efefef"/>
</svg>
<div class="r" style="left:1832px;top:907px;width:71px;height:27px;background:#222;"></div>
<div class="t " style="left:1838.4px;top:911.3px;font-size:13px;line-height:20px;font-weight:bold;color:#fff;">0.111174s</div>
<svg style="left:1676px;top:28px;opacity:0.53" width="210" height="86" viewBox="0 0 210 86">
<defs>
<radialGradient id="eg" cx="0.5" cy="0.45" r="0.62">
<stop offset="0" stop-color="#ffe800"/><stop offset="0.5" stop-color="#fbd000"/><stop offset="1" stop-color="#f09a28"/>
</radialGradient>
<mask id="gap" maskUnits="userSpaceOnUse" x="0" y="0" width="80" height="86">
<rect x="0" y="0" width="80" height="86" fill="#fff"/>
<path d="M23 2 C16 11, 12 27, 19 37 C25 43.5, 38 41.5, 46 43.5 C54 47, 53.5 62, 49.5 71 C48 75, 46 78, 44 81" fill="none" stroke="#000" stroke-width="4.6" stroke-linecap="round"/>
</mask>
</defs>
<g mask="url(#gap)">
<ellipse cx="33.5" cy="41.5" rx="29.5" ry="40" fill="url(#eg)"/>
<path d="M6 36 C12 46, 26 46, 38 44.5 C48 43.5, 58 46, 62 56" fill="none" stroke="#e0506a" stroke-width="2.2" opacity="0.45"/>
</g>
<path d="M75.3 11.3 V48.6 M97.5 11.3 L77.5 31.5 M82 27.5 L99 48.6" fill="none" stroke="#fb722c" stroke-width="3.6"/>
<path d="M116.2 11.3 V48.6 M107.2 12.8 H117" fill="none" stroke="#fb722c" stroke-width="3.6"/>
<text x="121.5" y="51" font-family="Liberation Sans" font-size="52" font-weight="bold" fill="#149a09" textLength="41" lengthAdjust="spacingAndGlyphs">源</text>
<path d="M123 12 L125.5 6 L128 10 L130 1 L132 10 L134.5 6 L137 12 Z" fill="#149a09"/>
<text x="167" y="51.5" font-family="Liberation Sans" font-size="52" font-weight="bold" fill="#fb722c" textLength="37" lengthAdjust="spacingAndGlyphs">码</text>
<text x="71.5" y="77" font-family="Liberation Mono" font-size="15.5" fill="#149a09" textLength="133" lengthAdjust="spacing">k1ym.com</text>
</svg>
</body></html>
